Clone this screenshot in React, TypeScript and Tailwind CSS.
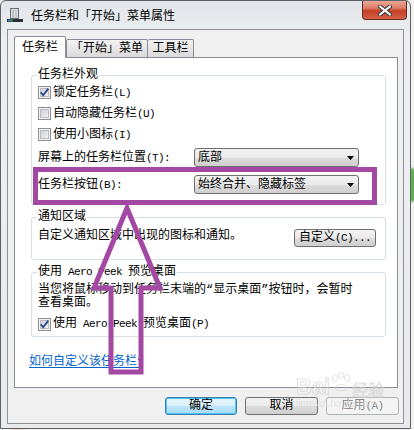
import React, { useId } from 'react';

const PURPLE = '#A349A4';

const btnGradient =
  'bg-[linear-gradient(#f2f2f2_0%,#ebebeb_50%,#dddddd_51%,#cfcfcf_100%)]';

// SimSun-like mix: half-width latin runs are narrower than the CJK glyphs
function T({ children }: { children: string }) {
  const parts = children.split(/([\x20-\x7e]+)/);
  return (
    <>
      {parts.map((p, i) =>
        /^[\x20-\x7e]+$/.test(p) ? (
          <span key={i} className="text-[11px] tracking-[-0.6px]">
            {p}
          </span>
        ) : (
          <React.Fragment key={i}>{p}</React.Fragment>
        )
      )}
    </>
  );
}

function Checkbox({ checked }: { checked?: boolean }) {
  const id = useId();
  return (
    <svg width="13" height="13" viewBox="0 0 13 13" className="shrink-0">
      <defs>
        <linearGradient id={id} x1="0" y1="0" x2="1" y2="1">
          <stop offset="0" stopColor="#c9cdd3" />
          <stop offset="1" stopColor="#f6f6f6" />
        </linearGradient>
      </defs>
      <rect x="0.5" y="0.5" width="12" height="12" fill="#f4f4f4" stroke="#8e8f8f" />
      <rect x="2.5" y="2.5" width="8" height="8" fill={`url(#${id})`} stroke="#b9bcc1" />
      {checked && (
        <path d="M2.8 6.3 L5.2 9.3 L10.3 2.6" fill="none" stroke="#2d4a8c" strokeWidth="1.8" />
      )}
    </svg>
  );
}

function CheckRow({ label, checked }: { label: string; checked?: boolean }) {
  return (
    <div className="flex items-center gap-[2px] h-[21px]">
      <Checkbox checked={checked} />
      <span>
        <T>{label}</T>
      </span>
    </div>
  );
}

function Combo({ value }: { value: string }) {
  return (
    <div
      className={`w-[165px] h-[19px] rounded-[3px] border border-[#707070] ${btnGradient} flex items-center pl-[3px] pr-[4px]`}
    >
      <span>{value}</span>
      <svg width="7" height="4" viewBox="0 0 7 4" className="ml-auto">
        <polygon points="0,0 7,0 3.5,4" fill="#000" />
      </svg>
    </div>
  );
}

function WinButton({
  children,
  width,
  variant = 'normal',
}: {
  children: string;
  width: string;
  variant?: 'normal' | 'default' | 'disabled';
}) {
  const styles = {
    normal: `border-[#707070] ${btnGradient} text-black`,
    default:
      'border-[#3c7fb1] bg-[linear-gradient(#eaf6fd_0%,#d9f0fc_50%,#bee6fd_51%,#a7d9f5_100%)] text-black shadow-[inset_0_0_0_1px_#48c4f5]',
    disabled: 'border-[#adb2b5] bg-[#f4f4f4] text-[#838383]',
  }[variant];
  return (
    <div
      className={`${width} h-[18px] rounded-[3px] border flex items-center justify-center ${styles}`}
    >
      <span>
        <T>{children}</T>
      </span>
    </div>
  );
}

function TitleIcon() {
  return (
    <svg width="16" height="16" viewBox="0 0 16 16" className="shrink-0">
      <rect x="3.5" y="1.5" width="8" height="10" fill="#d9dcdf" stroke="#6b7075" />
      <line x1="6" y1="3" x2="6" y2="11" stroke="#9ea3a8" />
      <line x1="9" y1="3" x2="9" y2="11" stroke="#b5b9bd" />
      <rect x="0" y="12" width="16" height="3" fill="#2b3038" />
      <rect x="1" y="12.5" width="2" height="2" fill="#3b7fd8" />
      <rect x="3.5" y="12.5" width="2" height="2" fill="#4cb050" />
    </svg>
  );
}

export default function App() {
  return (
    <div className="relative w-[414px] h-[430px] overflow-hidden bg-[#f3f2ee] text-[12px] leading-[14px] text-black font-[family-name:'Liberation_Mono','Noto_Sans_CJK_SC',monospace]">
      {/* desktop showing through the glass frame */}
      <div className="absolute left-[407px] top-[168px] w-[9px] h-[34px] rounded-full bg-[#5fae4c] blur-[1px]" />
      <div className="absolute left-[10px] top-[423px] w-[16px] h-[6px] rounded-full bg-[#f0a5a0] blur-[1px]" />

      {/* Window */}
      <div className="relative w-[411px] h-[429px] border border-[#5d6166] rounded-t-[6px] bg-[linear-gradient(180deg,#e2e6ea_0px,#edeff1_40px,#e8eaec_100%)] flex flex-col">
        {/* Title bar */}
        <div className="h-[28px] flex items-center pl-[6px]">
          <TitleIcon />
          <span className="ml-[8px] text-[12px] font-[family-name:'Noto_Sans_CJK_SC',sans-serif]">
            任务栏和「开始」菜单属性
          </span>
          <div className="ml-auto mr-[3px] self-start w-[45px] h-[19px] rounded-b-[4px] border border-t-0 border-[#6b2b20] bg-[linear-gradient(#eba797_0%,#dc7a63_40%,#c53f26_55%,#d4614a_100%)] flex items-center justify-center">
            <svg width="14" height="11" viewBox="0 0 14 11">
              <path d="M2 1.5 L12 9.5 M12 1.5 L2 9.5" stroke="#3b3b3b" strokeWidth="4.2" strokeLinecap="round" />
              <path d="M2 1.5 L12 9.5 M12 1.5 L2 9.5" stroke="#ffffff" strokeWidth="2.2" strokeLinecap="round" />
            </svg>
          </div>
        </div>

        {/* Client area */}
        <div className="ml-[6px] w-[397px] h-[395px] border border-[#8d9095] bg-[#f0f0f0] pt-[6px] pl-[6px] pr-[5px] flex flex-col">
          {/* Tabs */}
          <div className="h-[21px] flex items-end">
            <div className="relative z-10 w-[52px] h-[22px] -mb-px bg-white border border-b-0 border-[#898c95] rounded-t-[2px] flex items-center justify-center">
              任务栏
            </div>
            <div className="w-[82px] h-[18px] border border-b-0 border-[#898c95] rounded-t-[2px] bg-[linear-gradient(#f3f3f3,#dadada)] flex items-center justify-center">
              「开始」菜单
            </div>
            <div className="w-[46px] h-[18px] border border-b-0 border-l-0 border-[#898c95] rounded-t-[2px] bg-[linear-gradient(#f3f3f3,#dadada)] flex items-center justify-center">
              工具栏
            </div>
          </div>

          {/* Tab panel */}
          <div className="h-[331px] border border-[#898c95] bg-white pt-[10px] pl-[16px] pr-[11px] flex flex-col">
            {/* 任务栏外观 */}
            <fieldset className="border border-[#d5dfe5] rounded-[3px] pl-[6px] pr-[6px] pb-[10px]">
              <legend className="px-[1px] -ml-[1px]">任务栏外观</legend>
              <CheckRow label="锁定任务栏(L)" checked />
              <CheckRow label="自动隐藏任务栏(U)" />
              <CheckRow label="使用小图标(I)" />
              <div className="mt-[3px] h-[19px] flex items-center">
                <span className="w-[156px]">
                  <T>屏幕上的任务栏位置(T):</T>
                </span>
                <Combo value="底部" />
              </div>
              <div className="mt-[8px] h-[19px] flex items-center">
                <span className="w-[156px]">
                  <T>任务栏按钮(B):</T>
                </span>
                <Combo value="始终合并、隐藏标签" />
              </div>
            </fieldset>

            {/* 通知区域 */}
            <fieldset className="mt-[5px] border border-[#d5dfe5] rounded-[3px] pl-[6px] pr-[9px] pb-[11px]">
              <legend className="px-[1px] -ml-[1px]">通知区域</legend>
              <div className="mt-[5px] h-[19px] flex items-start">
                <span>自定义通知区域中出现的图标和通知。</span>
                <div className="ml-auto">
                  <WinButton width="w-[82px]">自定义(C)...</WinButton>
                </div>
              </div>
            </fieldset>

            {/* Aero Peek */}
            <fieldset className="mt-[5px] border border-[#d5dfe5] rounded-[3px] pl-[6px] pr-[6px] pb-[2px]">
              <legend className="px-[1px] -ml-[1px]">
                <T>使用 Aero Peek 预览桌面</T>
              </legend>
              <p className="mt-[5px] leading-[13px] whitespace-nowrap">
                当您将鼠标移动到任务栏末端的“显示桌面”按钮时，会暂时
                <br />
                查看桌面。
              </p>
              <div className="mt-[4px] h-[20px] flex items-center gap-[2px]">
                <Checkbox checked />
                <span>
                  <T>使用 Aero Peek 预览桌面(P)</T>
                </span>
              </div>
            </fieldset>

            <a className="mt-[18px] -ml-[2px] text-[#0066cc] underline underline-offset-2 w-fit">
              <T>如何自定义该任务栏?</T>
            </a>
          </div>

          {/* Dialog buttons */}
          <div className="mt-[9px] flex justify-end gap-[8px] -mr-[1px]">
            <WinButton width="w-[72px]" variant="default">确定</WinButton>
            <WinButton width="w-[73px]">取消</WinButton>
            <WinButton width="w-[73px]" variant="disabled">应用(A)</WinButton>
          </div>
        </div>
      </div>

      {/* watermark */}
      <div className="absolute left-[296px] top-[372px] pointer-events-none flex flex-col opacity-60">
        <div className="flex items-end">
          <span className="text-[22px] leading-[22px] font-bold text-white/30 [-webkit-text-stroke:1px_#cfcfcf] font-[family-name:Arial,'Liberation_Sans',sans-serif]">
            Bai
          </span>
          <svg width="22" height="20" viewBox="0 0 22 20" className="mb-[6px]">
            <g fill="none" stroke="#cfcfcf">
              <ellipse cx="5" cy="6" rx="2.5" ry="3.5" />
              <ellipse cx="11" cy="3.5" rx="2.5" ry="3" />
              <ellipse cx="17" cy="6" rx="2.5" ry="3.5" />
              <path d="M5 17 C5 11 17 11 17 17 C17 19 5 19 5 17 Z" />
            </g>
          </svg>
          <span className="text-[16px] leading-[18px] text-white/30 [-webkit-text-stroke:1px_#cfcfcf] font-[family-name:'Noto_Sans_CJK_SC',sans-serif]">
            经验
          </span>
        </div>
        <span className="text-[10px] leading-[11px] text-[#dadada] font-[family-name:'Liberation_Sans',sans-serif]">
          jingyan.baidu.com
        </span>
      </div>

      {/* purple annotation */}
      <svg className="absolute left-0 top-0 pointer-events-none" width="414" height="430">
        <rect x="35.5" y="169.5" width="339" height="33" fill="none" stroke={PURPLE} strokeWidth="5" />
        <polygon
          points="127,208 94,288 111,288 111,372 141,372 141,288 160,288"
          fill="none"
          stroke={PURPLE}
          strokeWidth="5"
        />
      </svg>
    </div>
  );
}
